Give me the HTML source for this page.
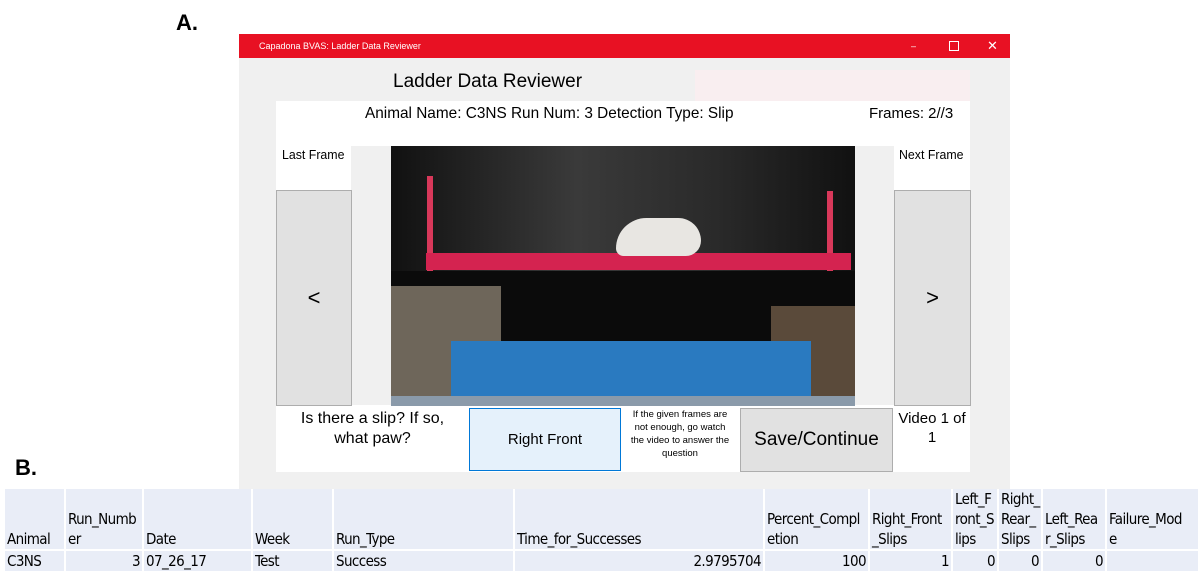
<!DOCTYPE html>
<html><head><meta charset="utf-8"><style>
body{margin:0;width:1200px;height:579px;background:#fff;position:relative;overflow:hidden;font-family:"Liberation Sans",sans-serif}
.a{position:absolute;white-space:nowrap}
td{background:#e9edf7;font-size:15px;padding:0 2px;vertical-align:bottom;line-height:20px;border-right:2px solid #fff;border-bottom:2px solid #fff;font-family:"DejaVu Sans Condensed",sans-serif;letter-spacing:-0.6px;white-space:nowrap;overflow:hidden}
</style></head><body>
<div class="a" style="left:176px;top:10px;font-size:22px;font-weight:bold">A.</div>
<div class="a" style="left:15px;top:455px;font-size:22px;font-weight:bold">B.</div>
<div class="a" style="left:239px;top:34px;width:771px;height:455px;background:#f0f0f0"></div>
<div class="a" style="left:239px;top:34px;width:771px;height:24px;background:#e81123;color:#fff;font-size:9px;line-height:24px">
<span style="margin-left:20px">Capadona BVAS: Ladder Data Reviewer</span>
<span class="a" style="left:672px;top:0">–</span><span class="a" style="left:710px;top:7px;width:8px;height:8px;border:1px solid #fff"></span><span class="a" style="left:748px;top:0;font-size:13px">✕</span></div>
<div class="a" style="left:393px;top:71px;font-size:19px">Ladder Data Reviewer</div>
<div class="a" style="left:695px;top:70px;width:275px;height:31px;background:#f9eef0"></div>
<div class="a" style="left:276px;top:101px;width:694px;height:371px;background:#fff"></div>
<div class="a" style="left:365px;top:105px;font-size:16px;transform:scaleX(0.96);transform-origin:left">Animal Name: C3NS Run Num: 3 Detection Type: Slip</div>
<div class="a" style="left:869px;top:105px;font-size:15px">Frames: 2//3</div>
<div class="a" style="left:351px;top:146px;width:40px;height:259px;background:#f0f0f0"></div>
<div class="a" style="left:855px;top:146px;width:39px;height:259px;background:#f0f0f0"></div>
<div class="a" style="left:282px;top:147px;font-size:13px;transform:scaleX(0.95);transform-origin:left">Last Frame</div>
<div class="a" style="left:899px;top:147px;font-size:13px;transform:scaleX(0.95);transform-origin:left">Next Frame</div>
<div class="a" style="left:276px;top:190px;width:74px;height:214px;background:#e1e1e1;border:1px solid #adadad;font-size:22px;text-align:center;line-height:214px">&lt;</div>
<div class="a" style="left:894px;top:190px;width:75px;height:214px;background:#e1e1e1;border:1px solid #adadad;font-size:22px;text-align:center;line-height:214px">&gt;</div>
<div class="a" style="left:391px;top:146px;width:464px;height:260px;background:linear-gradient(90deg,#111,#3a3a3a 40%,#2a2a2a 70%,#111);overflow:hidden">
<div class="a" style="left:36px;top:30px;width:6px;height:100px;background:#d8385a"></div>
<div class="a" style="left:436px;top:45px;width:6px;height:85px;background:#d8385a"></div>
<div class="a" style="left:35px;top:107px;width:425px;height:17px;background:#d42350"></div>
<div class="a" style="left:225px;top:72px;width:85px;height:38px;background:#e8e6e2;border-radius:40px 30px 20px 10px"></div>
<div class="a" style="left:0;top:125px;width:464px;height:70px;background:#0b0b0b"></div>
<div class="a" style="left:0;top:140px;width:110px;height:110px;background:#6e665a"></div>
<div class="a" style="left:380px;top:160px;width:84px;height:90px;background:#5a4a3a"></div>
<div class="a" style="left:60px;top:195px;width:360px;height:55px;background:#2a7ac0"></div>
<div class="a" style="left:0;top:250px;width:464px;height:10px;background:#8a9aaa"></div>
</div>
<div class="a" style="left:280px;top:409px;width:185px;text-align:center;font-size:16px;line-height:20px">Is there a slip? If so,<br>what paw?</div>
<div class="a" style="left:469px;top:408px;width:150px;height:61px;background:#e5f1fb;border:1px solid #0078d7;text-align:center;line-height:61px;font-size:15px">Right Front</div>
<div class="a" style="left:622px;top:408px;width:116px;text-align:center;font-size:9.5px;line-height:13px">If the given frames are<br>not enough, go watch<br>the video to answer the<br>question</div>
<div class="a" style="left:740px;top:408px;width:151px;height:62px;background:#e1e1e1;border:1px solid #adadad;text-align:center;line-height:62px;font-size:19px">Save/Continue</div>
<div class="a" style="left:894px;top:409px;width:76px;text-align:center;font-size:15px;line-height:19px">Video 1 of<br>1</div>
<table class="a" style="left:5px;top:489px;border-collapse:collapse;table-layout:fixed;width:1194px" cellspacing="0">
<colgroup><col style="width:60px"><col style="width:78px"><col style="width:109px"><col style="width:81px"><col style="width:181px"><col style="width:250px"><col style="width:105px"><col style="width:83px"><col style="width:46px"><col style="width:44px"><col style="width:64px"><col style="width:93px"></colgroup>
<tr style="height:59px"><td>Animal</td><td>Run_Numb<br>er</td><td>Date</td><td>Week</td><td>Run_Type</td><td>Time_for_Successes</td><td>Percent_Compl<br>etion</td><td>Right_Front<br>_Slips</td><td>Left_F<br>ront_S<br>lips</td><td>Right_<br>Rear_<br>Slips</td><td>Left_Rea<br>r_Slips</td><td>Failure_Mod<br>e</td></tr>
<tr style="height:20px"><td>C3NS</td><td style="text-align:right">3</td><td>07_26_17</td><td>Test</td><td>Success</td><td style="text-align:right">2.9795704</td><td style="text-align:right">100</td><td style="text-align:right">1</td><td style="text-align:right">0</td><td style="text-align:right">0</td><td style="text-align:right">0</td><td></td></tr>
</table>
</body></html>
